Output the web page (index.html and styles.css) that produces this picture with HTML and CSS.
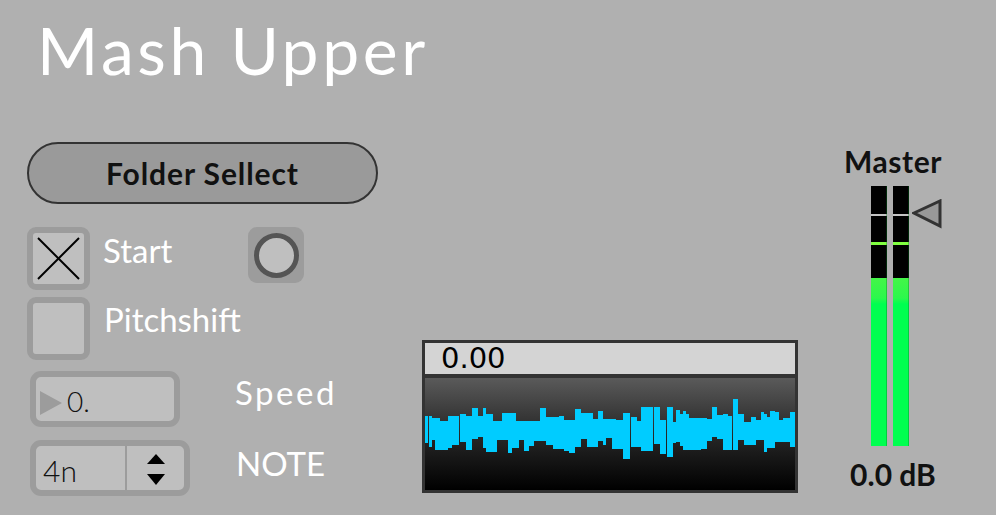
FILE: index.html
```html
<!DOCTYPE html>
<html lang="en">
<head>
    <meta charset="UTF-8">
    <title>Mash Upper</title>
    <link rel="stylesheet" href="styles.css">
</head>
<body>

<div class="patch">
    <h1 class="title">Mash Upper</h1>

    <div class="main">
        <div class="controls">
            <button class="folder-btn" type="button">Folder Sellect</button>

            <div class="row row-start">
                <span class="toggle">
                    <svg width="51" height="51" viewBox="0 0 51 51">
                        <line x1="5" y1="5" x2="46" y2="46" stroke="#000" stroke-width="2"/>
                        <line x1="46" y1="5" x2="5" y2="46" stroke="#000" stroke-width="2"/>
                    </svg>
                </span>
                <span class="label label-start">Start</span>
                <span class="bang"><span class="bang-ring"></span></span>
            </div>

            <div class="row row-pitch">
                <span class="toggle"></span>
                <span class="label label-pitch">Pitchshift</span>
            </div>

            <div class="row row-speed">
                <div class="numbox">
                    <svg class="numbox-arrow" width="22" height="24" viewBox="0 0 22 24">
                        <polygon points="0,0 22,12 0,24" fill="#9c9c9c"/>
                    </svg>
                    <span class="numbox-value">0.</span>
                </div>
                <span class="label label-speed">Speed</span>
            </div>

            <div class="row row-note">
                <div class="umenu">
                    <span class="umenu-value">4n</span>
                    <span class="umenu-arrows">
                        <svg width="18" height="31" viewBox="0 0 18 31">
                            <polygon points="9,0 18,10 0,10" fill="#000"/>
                            <polygon points="0,20 18,20 9,31" fill="#000"/>
                        </svg>
                    </span>
                </div>
                <span class="label label-note">NOTE</span>
            </div>
        </div> <!-- end controls -->

        <div class="waveform">
            <div class="wave-readout">0.00</div>
            <svg class="wave-display" id="waveDisplay" width="370" height="112" viewBox="0 0 370 112"></svg>
        </div> <!-- end waveform -->

        <div class="master">
            <div class="master-title">Master</div>
            <div class="meter">
                <div class="meter-bar"></div>
                <div class="meter-bar"></div>
                <svg class="meter-handle" width="30" height="30" viewBox="0 0 30 30">
                    <polygon points="2,14 28,2 28,27" fill="#999" stroke="#333" stroke-width="3" stroke-linejoin="miter"/>
                </svg>
            </div>
            <div class="master-db">0.0 dB</div>
        </div> <!-- end master -->
    </div>
</div>

<script src="script.js"></script>
</body>
</html>
```

FILE: styles.css
```css
body {
    margin: 0;
    background-color: #b0b0b0;
    font-family: "Lato", "Open Sans", sans-serif;
}

.patch {
    width: 996px;
    height: 515px;
    overflow: hidden;
}

.title {
    margin: 0;
    height: 142px;
    box-sizing: border-box;
    padding: 17px 0 0 37px;
    font-size: 66px;
    font-weight: 400;
    line-height: 1;
    color: #fff;
    letter-spacing: 3.6px;
}

.main {
    display: flex;
    align-items: flex-start;
}

/* left column */

.controls {
    margin-left: 27px;
    width: 351px;
}

.folder-btn {
    display: block;
    width: 351px;
    height: 62px;
    border: 2px solid #333;
    border-radius: 31px;
    background-color: #9a9a9a;
    font-family: "Lato", sans-serif;
    font-size: 30px;
    font-weight: bold;
    letter-spacing: 0.9px;
    color: #111;
    padding: 0;
}

.row {
    display: flex;
    align-items: flex-start;
}

.row-start {
    margin-top: 23px;
}

.row-pitch {
    margin-top: 7px;
}

.row-speed {
    margin-top: 11px;
    padding-left: 3px;
}

.row-note {
    margin-top: 13px;
    padding-left: 3px;
}

.label {
    color: #fff;
    font-size: 33px;
    line-height: 1;
    margin-top: 6px;
}

.label-start {
    width: 158px;
    box-sizing: border-box;
    padding-left: 13px;
    margin-top: 7px;
}

.label-pitch {
    margin-left: 14px;
}

.label-speed {
    margin-left: 55px;
    margin-top: 5px;
    letter-spacing: 2.5px;
}

.label-note {
    margin-left: 46px;
    margin-top: 7px;
}

.toggle {
    display: block;
    width: 63px;
    height: 63px;
    box-sizing: border-box;
    border: 6px solid #9c9c9c;
    border-radius: 9px;
    background-color: #bfbfbf;
}

.toggle svg {
    display: block;
}

.bang {
    display: flex;
    align-items: center;
    justify-content: center;
    width: 56px;
    height: 56px;
    border-radius: 9px;
    background-color: #9c9c9c;
}

.bang-ring {
    width: 45px;
    height: 45px;
    box-sizing: border-box;
    border: 5px solid #555;
    border-radius: 50%;
    background-color: #bfbfbf;
}

.numbox {
    display: flex;
    align-items: flex-start;
    width: 150px;
    height: 56px;
    box-sizing: border-box;
    border: 6px solid #9c9c9c;
    border-radius: 11px;
    background-color: #bfbfbf;
}

.numbox-arrow {
    margin: 14px 0 0 4px;
}

.numbox-value {
    margin-left: 5px;
    font-size: 28px;
    font-weight: 300;
    line-height: 44px;
    padding-top: 2px;
    color: #111;
}

.umenu {
    display: flex;
    width: 160px;
    height: 56px;
    box-sizing: border-box;
    border: 6px solid #9c9c9c;
    border-radius: 11px;
    background-color: #bfbfbf;
}

.umenu-value {
    width: 91px;
    padding-left: 7px;
    box-sizing: border-box;
    border-right: 2px solid #9c9c9c;
    font-size: 30px;
    font-weight: 300;
    line-height: 44px;
    padding-top: 2px;
    color: #111;
}

.umenu-arrows {
    flex: 1;
    display: flex;
    align-items: center;
    justify-content: center;
}

.umenu-arrows svg {
    display: block;
    margin-top: 2px;
}

/* waveform */

.waveform {
    display: flex;
    flex-direction: column;
    margin-left: 44px;
    margin-top: 198px;
    width: 376px;
    height: 153px;
    box-sizing: border-box;
    border: 3px solid #333;
    background-color: #333;
}

.wave-readout {
    height: 31px;
    margin-bottom: 4px;
    padding-left: 16px;
    background-color: #d4d4d4;
    font-family: "DejaVu Sans", sans-serif;
    font-size: 29px;
    line-height: 31px;
    color: #000;
}

.wave-display {
    display: block;
    background: linear-gradient(#5a5a5a, #2c2c2c 45%, #000);
}

/* master meter */

.master {
    display: flex;
    flex-direction: column;
    align-items: center;
    margin-left: 40px;
    margin-top: 4px;
    width: 110px;
}

.master-title,
.master-db {
    font-size: 30px;
    font-weight: bold;
    line-height: 1;
    color: #111;
}

.master-title {
    letter-spacing: 0.6px;
}

.meter {
    position: relative;
    display: flex;
    gap: 6px;
    align-self: flex-start;
    margin: 10px 0 0 33px;
}

.meter-bar {
    width: 16px;
    height: 260px;
    background: linear-gradient(#000 0, #000 28px, #c4c4c4 28px, #c4c4c4 30px,
        #000 30px, #000 56px, #80ff40 56px, #80ff40 59px,
        #000 59px, #000 92px, #44f548 92px, #2cf84c 112px, #00ff50 118px, #00ff50 100%);
    box-shadow: inset -1px 0 0 rgba(0, 120, 30, 0.35);
}

.meter-handle {
    position: absolute;
    left: 41px;
    top: 13px;
}

.master-db {
    margin-top: 13px;
}
```

FILE: script.js
```js
// draw the waveform bars
var svg = document.getElementById("waveDisplay");
var seed = 23;

function rnd() {
    seed = (seed * 16807) % 2147483647;
    return (seed - 1) / 2147483646;
}

var mid = 53;
var x = 0;
var up = 12;
var down = 12;
var d = "";

while (x < 370) {
    var w = 3 + Math.floor(rnd() * 5);
    var r = rnd();
    if (r < 0.35) {
        up = 9 + rnd() * 16;
    } else if (r < 0.7) {
        down = 6 + rnd() * 16;
    } else {
        up = 9 + rnd() * 16;
        down = 6 + rnd() * 16;
    }
    var u = up;
    var dn = down;
    if (rnd() < 0.1) u += 8;
    if (rnd() < 0.12) dn += 14;
    if (x + w > 370) w = 370 - x;
    d += "M" + x + " " + Math.round(mid - u) + "h" + w + "V" + Math.round(mid + dn) + "h" + (-w) + "Z";
    x += w;
    if (rnd() < 0.07) x += 1;
}

var path = document.createElementNS("http://www.w3.org/2000/svg", "path");
path.setAttribute("d", d);
path.setAttribute("fill", "#00ccff");
path.setAttribute("shape-rendering", "crispEdges");
svg.appendChild(path);
```
